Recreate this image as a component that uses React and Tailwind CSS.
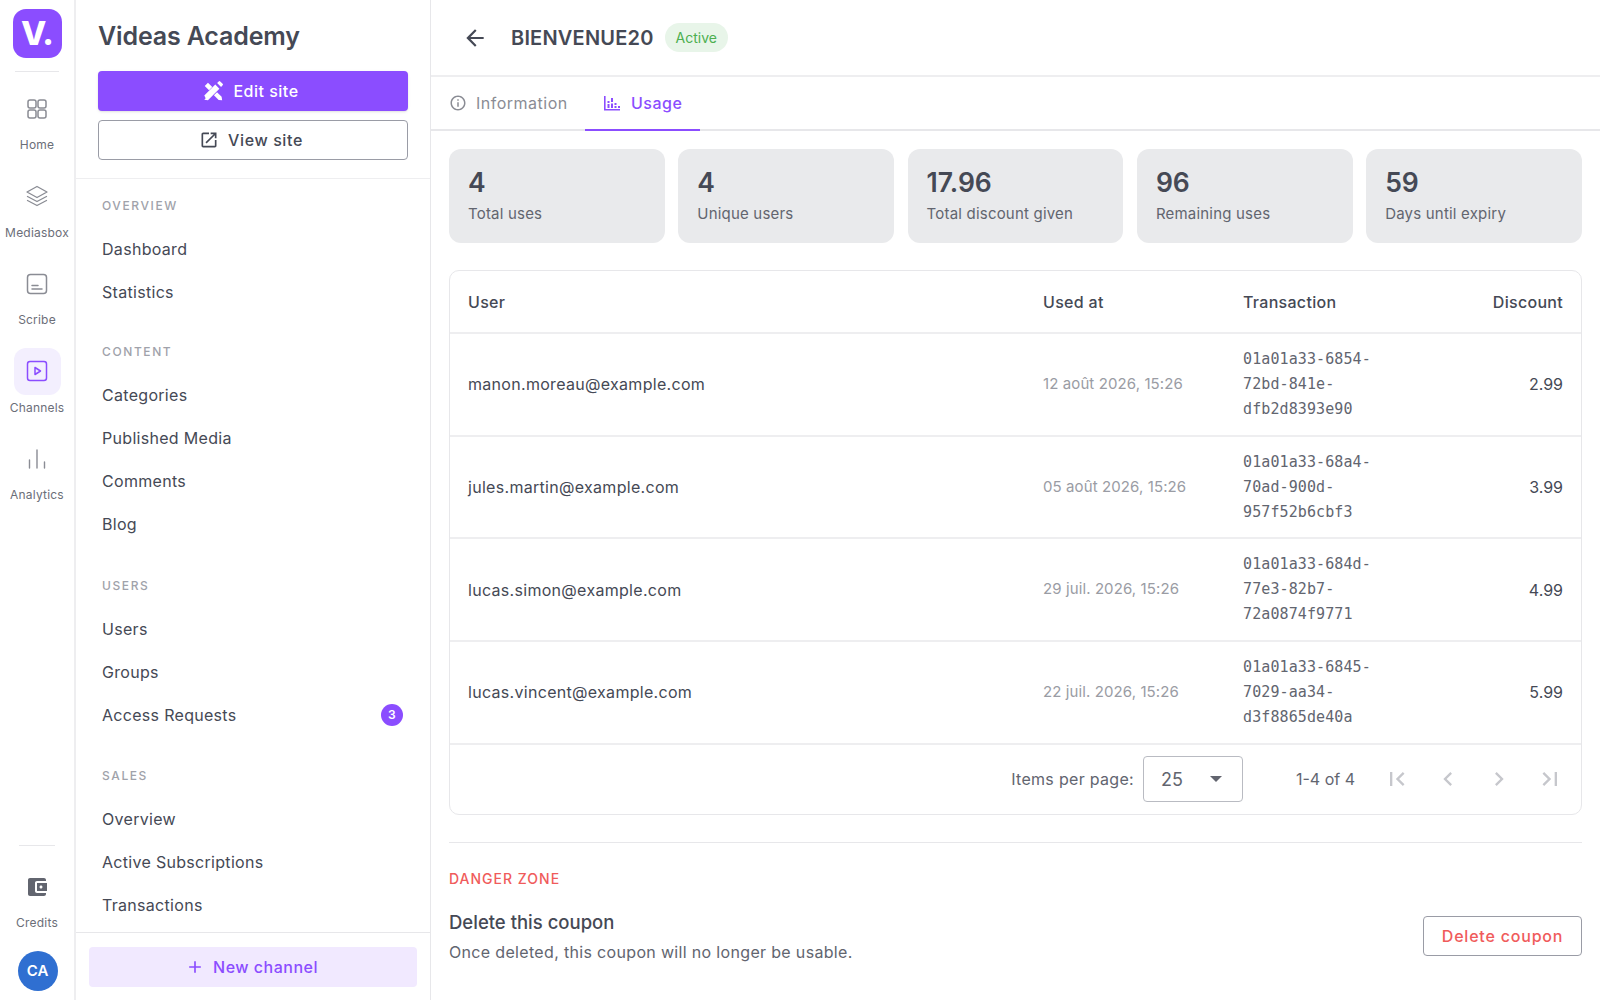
import React from "react";

const FONT = { fontFamily: "Inter, 'Noto Sans', sans-serif" };

function Mat({ d, size = 24, className = "" }) {
  return (
    <svg width={size} height={size} viewBox="0 0 24 24" fill="currentColor" className={className}>
      <path d={d} />
    </svg>
  );
}

const ICON = {
  open: "M19 19H5V5h7V3H5c-1.11 0-2 .9-2 2v14c0 1.1.89 2 2 2h14c1.1 0 2-.9 2-2v-7h-2v7zM14 3v2h3.59l-9.83 9.83 1.41 1.41L19 6.41V10h2V3h-7z",
  wallet: "M21 18v1c0 1.1-.9 2-2 2H5c-1.11 0-2-.9-2-2V5c0-1.1.89-2 2-2h14c1.1 0 2 .9 2 2v1h-9c-1.11 0-2 .9-2 2v8c0 1.1.89 2 2 2h9zm-9-2h10V8H12v8zm4-2.5c-.83 0-1.5-.67-1.5-1.5s.67-1.5 1.5-1.5 1.5.67 1.5 1.5-.67 1.5-1.5 1.5z",
  info: "M11 7h2v2h-2zm0 4h2v6h-2zm1-9C6.48 2 2 6.48 2 12s4.48 10 10 10 10-4.48 10-10S17.52 2 12 2zm0 18c-4.41 0-8-3.59-8-8s3.59-8 8-8 8 3.59 8 8-3.59 8-8 8z",
  first: "M18.41 16.59L13.82 12l4.59-4.59L17 6l-6 6 6 6zM6 6h2v12H6z",
  last: "M5.59 7.41L10.18 12l-4.59 4.59L7 18l6-6-6-6zM16 6h2v12h-2z",
  prev: "M15.41 7.41L14 6l-6 6 6 6 1.41-1.41L10.83 12z",
  next: "M10 6L8.59 7.41 13.17 12l-4.58 4.59L10 18l6-6z",
  back: "M20 11H7.83l5.59-5.59L12 4l-8 8 8 8 1.41-1.41L7.83 13H20v-2z",
  plus: "M19 13h-6v6h-2v-6H5v-2h6V5h2v6h6v2z",
};

function Stroke({ children, size = 24, className = "", w = 1.5 }) {
  return (
    <svg width={size} height={size} viewBox="0 0 24 24" fill="none" stroke="currentColor" strokeWidth={w} strokeLinecap="round" strokeLinejoin="round" className={className}>
      {children}
    </svg>
  );
}

function RailItem({ label, children, active }) {
  return (
    <div className="flex flex-col items-center h-[87.5px]">
      <div className={`w-[47px] h-[47px] rounded-[12px] flex items-center justify-center ${active ? "bg-[#f3effe] text-[#8b4dff]" : "text-[#8a8c94]"}`}>
        {children}
      </div>
      <span className="text-[12px] leading-[16px] tracking-[0.2px] mt-[5px] text-[#6b6e78]">{label}</span>
    </div>
  );
}

function Rail() {
  return (
    <aside className="w-[76px] h-full shrink-0 border-r-2 border-[#eeeef0] flex flex-col items-center bg-white">
      <div className="w-[49px] h-[49px] mt-[9px] shrink-0 rounded-[13px] bg-[#8b4dff] text-white flex items-center justify-center text-[33px] font-extrabold tracking-[-1px] leading-none">V.</div>
      <div className="w-[44px] h-px bg-[#e7e7ea] mt-[13px] mb-[13px] shrink-0" />
      <RailItem label="Home">
        <Stroke>
          <rect x="3" y="3" width="8" height="8" rx="2" />
          <rect x="13" y="3" width="8" height="8" rx="2" />
          <rect x="3" y="13" width="8" height="8" rx="2" />
          <rect x="13" y="13" width="8" height="8" rx="2" />
        </Stroke>
      </RailItem>
      <RailItem label="Mediasbox">
        <Stroke w={1.3}>
          <path d="M12 2.5 22 8l-10 5.5L2 8z" />
          <path d="M2.5 12.5 12 17.5l9.5-5" />
          <path d="M2.5 16.5 12 21.5l9.5-5" />
        </Stroke>
      </RailItem>
      <RailItem label="Scribe">
        <Stroke>
          <rect x="2.5" y="2.5" width="19" height="19" rx="3" />
          <path d="M7 13.5h6M7 17h10" />
        </Stroke>
      </RailItem>
      <RailItem label="Channels" active>
        <Stroke>
          <rect x="2.5" y="2.5" width="19" height="19" rx="2.5" />
          <path d="M10 8.5v7l5.5-3.5z" />
        </Stroke>
      </RailItem>
      <RailItem label="Analytics">
        <Stroke w={1.4}>
          <path d="M4.5 21v-8M12 21V3M19.5 21v-6" />
        </Stroke>
      </RailItem>
      <div className="flex-1" />
      <div className="w-[36px] h-px bg-[#e7e7ea] mb-[29px] shrink-0" />
      <div className="flex flex-col items-center">
        <Mat d={ICON.wallet} className="text-[#62656f]" />
        <span className="text-[12px] leading-[16px] tracking-[0.2px] text-[#6b6e78] mt-[16px]">Credits</span>
      </div>
      <div className="w-[40px] h-[40px] ml-[1px] rounded-full bg-[#2f6fd1] text-white flex items-center justify-center text-[15px] font-semibold mt-[20px] mb-[9px] shrink-0">CA</div>
    </aside>
  );
}

function Section({ title, items, className = "" }) {
  return (
    <div className={className}>
      <div className="px-[4px] h-[16px] flex items-center text-[12px] font-medium tracking-[1.6px] text-[#a0a2aa] uppercase">{title}</div>
      <div className="mt-[13px]">
        {items.map((it) => (
          <div key={it.label} className="h-[43px] px-[4px] flex items-center justify-between text-[16px] tracking-[0.3px] text-[#454955]">
            <span>{it.label}</span>
            {it.badge && (
              <span className="w-[22px] h-[22px] mr-[1px] rounded-full bg-[#8b4dff] text-white text-[12px] font-semibold flex items-center justify-center">{it.badge}</span>
            )}
          </div>
        ))}
      </div>
    </div>
  );
}

function Sidebar() {
  return (
    <aside className="w-[355px] h-full shrink-0 border-r border-[#e7e7ea] flex flex-col bg-white">
      <div className="px-[22px] h-[179px] shrink-0 border-b border-[#eeeef0]">
        <div className="h-[71px] pt-[2px] flex items-center text-[25px] leading-none font-semibold tracking-[-0.15px] text-[#454955]">Videas Academy</div>
        <button className="w-full h-[40px] pr-[5px] rounded-[4px] bg-[#8b4dff] text-white shadow-sm flex items-center justify-center gap-[9px] text-[16px] font-medium tracking-[0.5px]">
          <svg width="22" height="22" viewBox="0 0 24 24" className="text-white">
            <path d="M3 6.5 6.5 3l4.7 4.7-3.5 3.5zM13 16.7l3.4-3.4 5 5L22 22l-3.8-.3z" fill="currentColor" />
            <path d="M4 20l-1.5 1.5 4 .5L19 9.5 14.5 5 2.5 17z" fill="currentColor" />
            <path d="M16.5 3.2l1.7-1.7a1.2 1.2 0 0 1 1.7 0l2.6 2.6a1.2 1.2 0 0 1 0 1.7l-1.7 1.7z" fill="currentColor" />
          </svg>
          Edit site
        </button>
        <button className="w-full h-[40px] mt-[9px] pr-[4px] rounded-[4px] border border-[#9a9ca6] bg-white text-[#454955] flex items-center justify-center gap-[9px] text-[16px] font-medium tracking-[0.6px]">
          <Mat d={ICON.open} size={20} />
          View site
        </button>
      </div>
      <div className="flex-1 min-h-0 overflow-hidden px-[22px] pt-[19px]">
        <Section title="Overview" items={[{ label: "Dashboard" }, { label: "Statistics" }]} />
        <Section className="mt-[31px]" title="Content" items={[{ label: "Categories" }, { label: "Published Media" }, { label: "Comments" }, { label: "Blog" }]} />
        <Section className="mt-[33px]" title="Users" items={[{ label: "Users" }, { label: "Groups" }, { label: "Access Requests", badge: "3" }]} />
        <Section className="mt-[32px]" title="Sales" items={[{ label: "Overview" }, { label: "Active Subscriptions" }, { label: "Transactions" }]} />
      </div>
      <div className="h-[68px] shrink-0 border-t border-[#e7e7ea] px-[13px] pt-[14px]">
        <button className="w-full h-[40px] pr-[3px] rounded-[4px] bg-[#f1e9ff] text-[#8b4dff] flex items-center justify-center gap-[8px] text-[16px] font-medium tracking-[0.5px]">
          <Mat d={ICON.plus} size={20} />
          New channel
        </button>
      </div>
    </aside>
  );
}

function Stat({ value, label }) {
  return (
    <div className="h-[94px] rounded-[12px] bg-[#e9eaec] px-[19px] pt-[17px]">
      <div className="text-[26.5px] leading-[32px] font-semibold text-[#454955]">{value}</div>
      <div className="text-[15px] leading-[20px] tracking-[0.2px] text-[#62656f] mt-[6px]">{label}</div>
    </div>
  );
}

const ROWS = [
  ["manon.moreau@example.com", "12 août 2026, 15:26", "01a01a33-6854-72bd-841e-dfb2d8393e90", "2.99"],
  ["jules.martin@example.com", "05 août 2026, 15:26", "01a01a33-68a4-70ad-900d-957f52b6cbf3", "3.99"],
  ["lucas.simon@example.com", "29 juil. 2026, 15:26", "01a01a33-684d-77e3-82b7-72a0874f9771", "4.99"],
  ["lucas.vincent@example.com", "22 juil. 2026, 15:26", "01a01a33-6845-7029-aa34-d3f8865de40a", "5.99"],
];

const COLS = "grid grid-cols-[575px_200px_1fr_auto] items-center px-[18px]";

function Table() {
  return (
    <div className="mt-[27px] rounded-[10px] border border-[#e7e7ea] overflow-hidden">
      <div className={`${COLS} h-[63px] border-b-2 border-[#eeeef0] text-[16px] font-medium tracking-[0.3px] text-[#454955]`}>
        <span>User</span>
        <span>Used at</span>
        <span>Transaction</span>
        <span className="text-right">Discount</span>
      </div>
      {ROWS.map((r) => (
        <div key={r[0]} className={`${COLS} h-[102.7px] border-b-2 border-[#eeeef0]`}>
          <span className="text-[16px] tracking-[0.3px] text-[#454955]">{r[0]}</span>
          <span className="text-[15px] tracking-[0.1px] text-[#9a9ca4]">{r[1]}</span>
          <span className="text-[15px] leading-[25px] tracking-[0.1px] text-[#62656f] w-[150px]" style={{ fontFamily: "'DejaVu Sans Mono', monospace" }}>{r[2]}</span>
          <span className="text-[16px] text-right text-[#454955]">{r[3]}</span>
        </div>
      ))}
      <div className="h-[69px] flex items-center justify-end pr-[6px]">
        <span className="text-[16px] tracking-[0.3px] text-[#62656f]">Items per page:</span>
        <div className="w-[100px] h-[46px] ml-[9px] rounded-[4px] border border-[#b9bbc2] flex items-center justify-between pl-[17px] pr-[20px] text-[18px] text-[#62656f]">
          <span>25</span>
          <span className="w-0 h-0 border-l-[6px] border-r-[6px] border-t-[6px] border-l-transparent border-r-transparent border-t-[#62656f]" />
        </div>
        <span className="ml-[53px] mr-[16px] text-[16px] text-[#62656f]">1-4 of 4</span>
        <div className="flex text-[#c6c7cc]">
          {[ICON.first, ICON.prev, ICON.next, ICON.last].map((d, i) => (
            <div key={i} className="w-[51px] flex items-center justify-center">
              <Mat d={d} size={28} />
            </div>
          ))}
        </div>
      </div>
    </div>
  );
}

function Main() {
  return (
    <main className="flex-1 min-w-0 h-full overflow-hidden bg-white">
      <div className="h-[77px] border-b-2 border-[#eeeef0] flex items-center pl-[31px]">
        <Mat d={ICON.back} size={26} className="text-[#454955]" />
        <span className="ml-[23px] text-[20px] font-semibold tracking-[0.2px] text-[#454955]">BIENVENUE20</span>
        <span className="ml-[11px] h-[29px] px-[11px] rounded-full bg-[#e8f5e9] text-[#4caf50] text-[14px] flex items-center">Active</span>
      </div>
      <div className="h-[54px] border-b-2 border-[#e7e7ea] flex px-[18px]">
        <div className="h-full w-[136px] flex items-center gap-[9px] text-[#8a8c94] text-[16px] tracking-[0.5px]">
          <Mat d={ICON.info} size={18} />
          Information
        </div>
        <div className="h-[54px] w-[115px] border-b-2 border-[#8b4dff] flex items-center pl-[18px] gap-[10px] text-[#8b4dff] text-[16px] tracking-[0.5px] font-medium">
          <svg width="18" height="18" viewBox="0 0 18 18" fill="currentColor" className="shrink-0">
            <path d="M1 2h1.6v13H17v1.6H1z" />
            <rect x="4.5" y="7" width="2" height="2" />
            <rect x="4.5" y="10" width="2" height="4" />
            <rect x="8" y="4" width="2" height="4" />
            <rect x="8" y="9.5" width="2" height="4.5" />
            <rect x="11.5" y="9" width="2" height="2" />
            <rect x="11.5" y="12" width="2" height="2" />
            <rect x="15" y="12" width="2" height="2" />
          </svg>
          Usage
        </div>
      </div>
      <div className="px-[18px] pt-[18px]">
        <div className="grid grid-cols-5 gap-[13.5px]">
          <Stat value="4" label="Total uses" />
          <Stat value="4" label="Unique users" />
          <Stat value="17.96" label="Total discount given" />
          <Stat value="96" label="Remaining uses" />
          <Stat value="59" label="Days until expiry" />
        </div>
        <Table />
        <div className="h-px bg-[#e7e7ea] mt-[27px]" />
        <div className="mt-[27px] text-[14px] leading-[18px] font-medium tracking-[1px] text-[#f05b5b] uppercase">Danger zone</div>
        <div className="flex items-center justify-between mt-[21px]">
          <div>
            <div className="text-[18.5px] leading-[26px] font-medium text-[#454955]">Delete this coupon</div>
            <div className="text-[16px] leading-[22px] tracking-[0.33px] text-[#62656f] mt-[6px]">Once deleted, this coupon will no longer be usable.</div>
          </div>
          <button className="w-[159px] h-[40px] rounded-[4px] border border-[#9a9ca6] text-[#f05b5b] text-[16px] font-medium tracking-[0.8px]">Delete coupon</button>
        </div>
      </div>
    </main>
  );
}

export default function App() {
  return (
    <div className="w-[1600px] h-[1000px] flex overflow-hidden bg-white" style={FONT}>
      <Rail />
      <Sidebar />
      <Main />
    </div>
  );
}
